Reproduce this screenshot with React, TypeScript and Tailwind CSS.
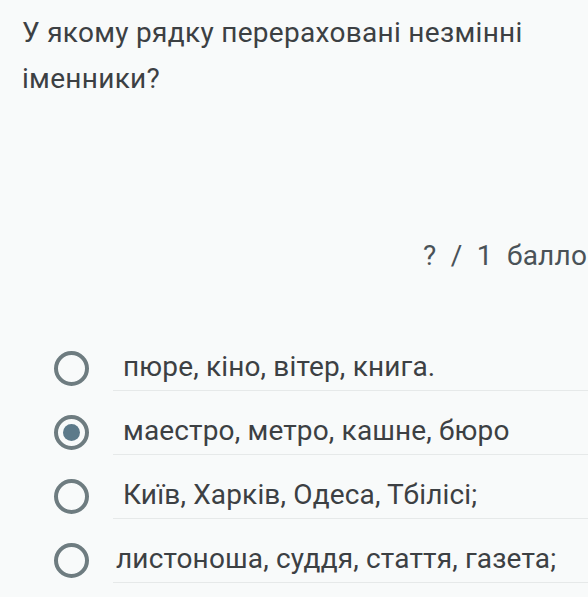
const options = [
  { label: 'пюре, кіно, вітер, книга.', pad: 'pl-[10px]', checked: false },
  { label: 'маестро, метро, кашне, бюро', pad: 'pl-[10px]', checked: true },
  { label: 'Київ, Харків, Одеса, Тбілісі;', pad: 'pl-[10px]', checked: false },
  { label: 'листоноша, суддя, стаття, газета;', pad: 'pl-[3px]', checked: false },
];

function Radio({ checked }: { checked: boolean }) {
  return (
    <div className="mt-[14px] flex h-[35px] w-[35px] shrink-0 items-center justify-center rounded-full border-[4px] border-[#6e7c80]">
      {checked && <div className="h-[17px] w-[17px] rounded-full bg-[#5c7a8a]" />}
    </div>
  );
}

export default function App() {
  return (
    <div className="h-[597px] w-[588px] overflow-hidden bg-[#f8fafa] text-[#3c4043] font-['Roboto',sans-serif]">
      <div className="pl-[22px] pt-[10px] text-[28px] leading-[46px] tracking-[0.3px]">
        У якому рядку перераховані незмінні
        <br />
        іменники?
      </div>

      <div className="mt-[134px] whitespace-nowrap pl-[423px] text-[28px] leading-[40px] tracking-[0.2px] text-[#4a5257]">
        ?&nbsp;&nbsp;/&nbsp;&nbsp;1&nbsp;&nbsp;балло
      </div>

      <div className="mt-[61px] flex flex-col">
        {options.map((o) => (
          <div key={o.label} className="flex h-[64px] items-start pl-[54px]">
            <Radio checked={o.checked} />
            <div className={`ml-[24px] h-[54px] flex-1 border-b border-[#e6e9e9] pt-[10px] ${o.pad} text-[28px] leading-[40px] tracking-[0.15px] whitespace-nowrap`}>
              {o.label}
            </div>
          </div>
        ))}
      </div>
    </div>
  );
}
